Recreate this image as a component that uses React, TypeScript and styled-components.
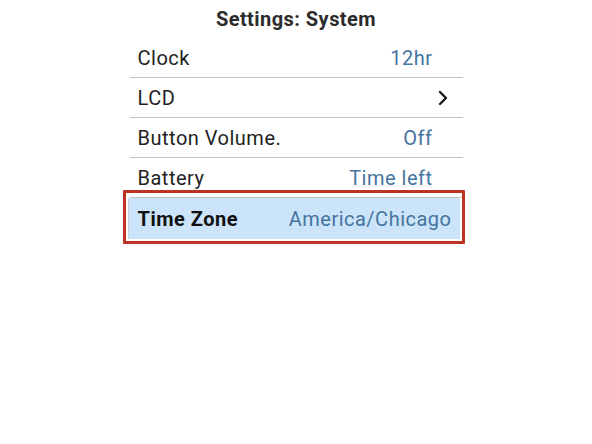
import React from "react";
import styled, { createGlobalStyle } from "styled-components";

const Global = createGlobalStyle`
  html, body { margin: 0; padding: 0; background: #ffffff; }
  body { font-family: Roboto, "Liberation Sans", Arial, sans-serif; }
`;

const Page = styled.div`
  width: 592px;
  height: 444px;
  background: #ffffff;
  display: flex;
  flex-direction: column;
  align-items: center;
`;

const Title = styled.div`
  height: 38px;
  display: flex;
  align-items: center;
  justify-content: center;
  font-size: 20px;
  font-weight: 700;
  color: #2b2b2b;
  letter-spacing: 0.45px;
`;

const List = styled.div`
  width: 333px;
  display: flex;
  flex-direction: column;
`;

const Row = styled.div<{ $pr?: number }>`
  height: 39px;
  display: flex;
  align-items: center;
  justify-content: space-between;
  padding: 0 ${(p) => p.$pr ?? 30}px 0 8px;
  border-bottom: 1px solid #c2c2c2;
  font-size: 20px;
  letter-spacing: 0.5px;
  color: #1f1f1f;
`;

const SelectedRow = styled.div`
  position: relative;
  height: 41px;
  margin: 0 3px 0 -2px;
  display: flex;
  align-items: center;
  justify-content: space-between;
  padding: 0 8px 0 10px;
  background: #cce4fa;
  box-shadow: inset 1px 0 0 #c9d3dc;
  font-size: 20px;
  letter-spacing: 0.5px;
  color: #111111;

  &::after {
    content: "";
    position: absolute;
    top: -8px;
    left: -5px;
    right: -5px;
    bottom: -5px;
    border: 3px solid #bd3424;
    border-radius: 1px;
    pointer-events: none;
  }
`;

const Label = styled.span<{ $bold?: boolean }>`
  font-weight: ${(p) => (p.$bold ? 700 : 400)};
`;

const Value = styled.span`
  color: #45749f;
`;

const Chevron = () => (
  <svg width="10" height="16" viewBox="0 0 10 16">
    <polyline
      points="2,2 8,8 2,14"
      fill="none"
      stroke="#1a1a1a"
      strokeWidth="2.4"
      strokeLinecap="round"
      strokeLinejoin="round"
    />
  </svg>
);

export default function App() {
  return (
    <Page>
      <Global />
      <Title>Settings: System</Title>
      <List>
        <Row>
          <Label>Clock</Label>
          <Value>12hr</Value>
        </Row>
        <Row $pr={15}>
          <Label>LCD</Label>
          <Chevron />
        </Row>
        <Row>
          <Label>Button Volume.</Label>
          <Value>Off</Value>
        </Row>
        <Row>
          <Label>Battery</Label>
          <Value>Time left</Value>
        </Row>
        <SelectedRow>
          <Label $bold>Time Zone</Label>
          <Value>America/Chicago</Value>
        </SelectedRow>
      </List>
    </Page>
  );
}
